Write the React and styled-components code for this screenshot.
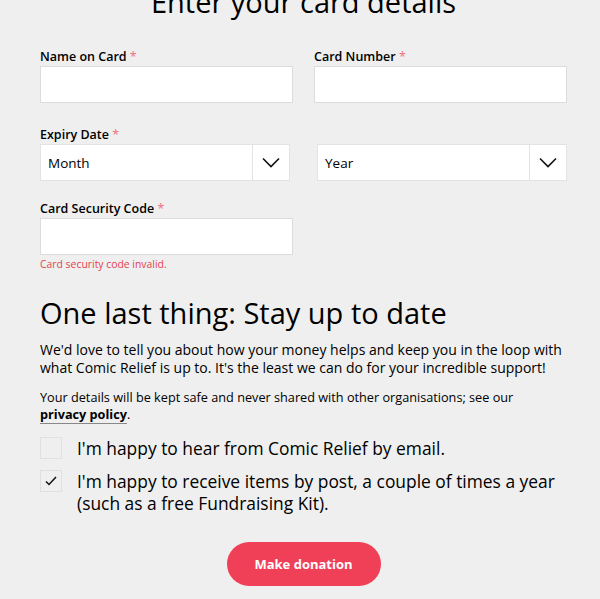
import styled, { createGlobalStyle } from 'styled-components';

const GlobalStyle = createGlobalStyle`
  html, body {
    margin: 0;
    background: #efefef;
    color: #000;
    font-family: 'Open Sans', 'Liberation Sans', sans-serif;
  }
`;

const Page = styled.main`
  padding: 0 33px 0 40px;
  margin-top: -16px;
`;

const Title = styled.h1`
  font-size: 29px;
  font-weight: 500;
  line-height: 35px;
  margin: 0 0 30px;
  text-align: center;
`;

const Row = styled.div`
  display: grid;
  grid-template-columns: 1fr 1fr;
  column-gap: ${props => props.$gap || '21px'};
  margin-bottom: ${props => props.$mb || '0'};
`;

const Field = styled.div`
  display: flex;
  flex-direction: column;
`;

const Label = styled.label`
  font-size: 12.5px;
  font-weight: 600;
  line-height: 16px;
  margin-bottom: 1px;
  span {
    color: #f07080;
    font-weight: 400;
  }
`;

const Input = styled.input`
  box-sizing: border-box;
  height: 37px;
  width: 100%;
  border: 1px solid #dcdcdc;
  background: #fff;
  margin: 0;
`;

const SelectBox = styled.div`
  box-sizing: border-box;
  display: flex;
  height: 37px;
  border: 1px solid #e3e3e3;
  background: #fff;
  font-size: 13.5px;
`;

const SelectText = styled.div`
  flex: 1;
  display: flex;
  align-items: center;
  padding-left: 7px;
`;

const Chevron = styled.div`
  width: 36px;
  display: flex;
  align-items: center;
  justify-content: center;
  border-left: 1px solid #e3e3e3;
`;

const ErrorText = styled.p`
  color: #e5414f;
  font-size: 10.4px;
  line-height: 12px;
  margin: 3px 0 0;
`;

const Heading = styled.h2`
  font-size: 29px;
  font-weight: 500;
  line-height: 36px;
  margin: 25px 0 10px;
`;

const Body = styled.p`
  font-size: ${props => props.$size || '14px'};
  line-height: ${props => props.$lh || '18px'};
  margin: 0 0 ${props => props.$mb || '12px'};
  white-space: nowrap;
  a {
    color: #000;
    font-weight: 700;
    text-decoration: none;
    border-bottom: 1px solid #888;
  }
`;

const Check = styled.div`
  display: flex;
  align-items: flex-start;
  gap: 15px;
  margin-bottom: 11px;
`;

const Box = styled.div`
  box-sizing: border-box;
  flex: none;
  width: 22px;
  height: 22px;
  border: 1px solid #e0e0e0;
  display: flex;
  align-items: center;
  justify-content: center;
`;

const CheckText = styled.div`
  font-size: 17.4px;
  line-height: 22px;
  white-space: nowrap;
`;

const Actions = styled.div`
  display: flex;
  justify-content: center;
  margin-top: 28px;
`;

const Button = styled.button`
  width: 154px;
  height: 44px;
  border: none;
  border-radius: 22px;
  background: #ef4057;
  color: #fff;
  font-family: inherit;
  font-size: 13px;
  font-weight: 700;
`;

const ChevronIcon = () => (
  <svg width="18" height="11" viewBox="0 0 18 11">
    <path d="M1 1.5l8 8 8-8" fill="none" stroke="#111" strokeWidth="1.6" />
  </svg>
);

const Select = ({ text }) => (
  <SelectBox>
    <SelectText>{text}</SelectText>
    <Chevron>
      <ChevronIcon />
    </Chevron>
  </SelectBox>
);

export default function App() {
  return (
    <Page>
      <GlobalStyle />
      <Title>Enter your card details</Title>
      <Row $mb="24px">
        <Field>
          <Label>Name on Card <span>*</span></Label>
          <Input />
        </Field>
        <Field>
          <Label>Card Number <span>*</span></Label>
          <Input />
        </Field>
      </Row>
      <Label as="div">Expiry Date <span>*</span></Label>
      <Row $gap="27px" $mb="20px">
        <Select text="Month" />
        <Select text="Year" />
      </Row>
      <Row>
        <Field>
          <Label>Card Security Code <span>*</span></Label>
          <Input />
          <ErrorText>Card security code invalid.</ErrorText>
        </Field>
      </Row>
      <Heading>One last thing: Stay up to date</Heading>
      <Body>
        We'd love to tell you about how your money helps and keep you in the loop with
        <br />
        what Comic Relief is up to. It's the least we can do for your incredible support!
      </Body>
      <Body $size="12.7px" $lh="17px" $mb="14px">
        Your details will be kept safe and never shared with other organisations; see our
        <br />
        <a href="#">privacy policy</a>.
      </Body>
      <Check>
        <Box />
        <CheckText>I'm happy to hear from Comic Relief by email.</CheckText>
      </Check>
      <Check>
        <Box>
          <svg width="12" height="10" viewBox="0 0 12 10">
            <path d="M1 5.5l3 3L11 1" fill="none" stroke="#111" strokeWidth="1.5" />
          </svg>
        </Box>
        <CheckText>
          I'm happy to receive items by post, a couple of times a year
          <br />
          (such as a free Fundraising Kit).
        </CheckText>
      </Check>
      <Actions>
        <Button>Make donation</Button>
      </Actions>
    </Page>
  );
}
